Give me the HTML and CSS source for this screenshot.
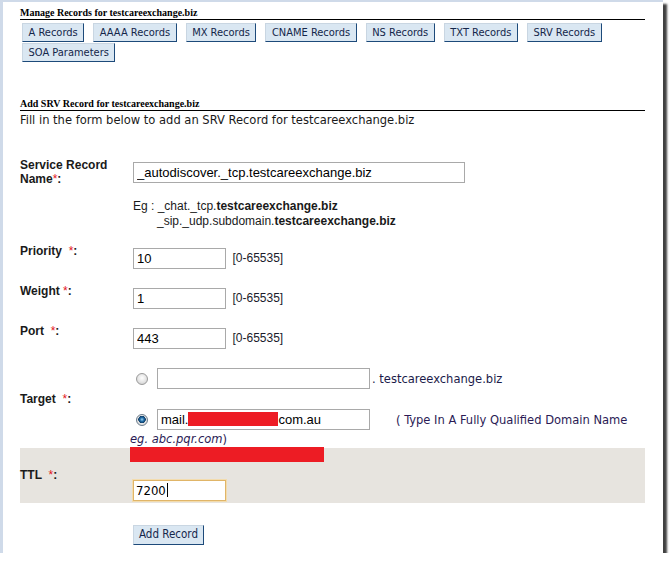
FILE: index.html
```html
<!DOCTYPE html>
<html lang="en">
  <head>
    <meta charset="UTF-8" />
    <title>Add SRV Record</title>
    <link rel="stylesheet" href="styles.css">
  </head>
  <body>
    <div class="window">
      <div class="page">
        <h2 class="section-title">Manage Records for testcareexchange.biz</h2>

        <div class="record-tabs">
          <a class="tab-button" href="#">A Records</a>
          <a class="tab-button" href="#">AAAA Records</a>
          <a class="tab-button" href="#">MX Records</a>
          <a class="tab-button" href="#">CNAME Records</a>
          <a class="tab-button" href="#">NS Records</a>
          <a class="tab-button" href="#">TXT Records</a>
          <a class="tab-button" href="#">SRV Records</a>
          <a class="tab-button" href="#">SOA Parameters</a>
        </div>

        <h2 class="section-title add-title">Add SRV Record for testcareexchange.biz</h2>
        <p class="intro">Fill in the form below to add an SRV Record for testcareexchange.biz</p>

        <form class="srv-form">
          <div class="form-row name-row">
            <label class="field-label">Service Record<br>Name<span class="req">*</span>:</label>
            <div class="field">
              <input class="text-input wide" type="text" value="_autodiscover._tcp.testcareexchange.biz">
              <div class="example">
                Eg : _chat._tcp.<b>testcareexchange.biz</b><br>
                <span class="indent">_sip._udp.subdomain.<b>testcareexchange.biz</b></span>
              </div>
            </div>
          </div>

          <div class="form-row">
            <label class="field-label">Priority &nbsp;<span class="req">*</span>:</label>
            <div class="field">
              <input class="text-input short" type="text" value="10">
              <span class="range">[0-65535]</span>
            </div>
          </div>

          <div class="form-row">
            <label class="field-label">Weight <span class="req">*</span>:</label>
            <div class="field">
              <input class="text-input short" type="text" value="1">
              <span class="range">[0-65535]</span>
            </div>
          </div>

          <div class="form-row">
            <label class="field-label">Port &nbsp;<span class="req">*</span>:</label>
            <div class="field">
              <input class="text-input short" type="text" value="443">
              <span class="range">[0-65535]</span>
            </div>
          </div>

          <div class="form-row target-row">
            <label class="field-label">Target &nbsp;<span class="req">*</span>:</label>
            <div class="field target-options">
              <div class="option">
                <span class="radio"></span>
                <input class="text-input target" type="text" value="">
                <span class="suffix">. testcareexchange.biz</span>
              </div>
              <div class="option">
                <span class="radio checked"></span>
                <div class="text-input target">mail.<span class="redact"></span>com.au</div>
                <span class="hint">( Type In A Fully Qualified Domain Name</span>
              </div>
            </div>
          </div>
          <div class="hint hint-wrap"><i>eg. abc.pqr.com</i>)</div>

          <div class="form-row ttl-row">
            <label class="field-label">TTL &nbsp;<span class="req">*</span>:</label>
            <div class="field">
              <div class="redact message"></div>
              <div class="text-input short focused">7200<span class="caret"></span></div>
            </div>
          </div>

          <div class="form-row submit-row">
            <div class="field-label"></div>
            <div class="field">
              <button class="tab-button submit" type="button">Add Record</button>
            </div>
          </div>
        </form>
      </div>
    </div>
  </body>
</html>
```

FILE: styles.css
```css
body {
  margin: 0;
  background: #ffffff;
  font-family: "Liberation Sans", Arial, sans-serif;
  color: #1a1a1a;
}

.window {
  width: 660px;
  height: 551px;
  border-top: 2px solid #cfdae9;
  border-left: 3px solid #cfdae9;
  background: #ffffff;
  box-shadow: 4px 4px 2px rgba(0, 0, 0, 0.75);
}

.page {
  width: 625px;
  margin-left: 17px;
}

.section-title {
  margin: 4px 0 0;
  font-family: "Liberation Serif", "Times New Roman", serif;
  font-size: 10px;
  line-height: 13px;
  font-weight: bold;
  color: #000;
  border-bottom: 1px solid #000;
}

.add-title {
  margin-top: 35px;
}

.record-tabs {
  display: flex;
  flex-wrap: wrap;
  column-gap: 9px;
  row-gap: 1px;
  padding: 3px 0 0 2px;
}

.tab-button {
  display: inline-block;
  box-sizing: border-box;
  height: 19px;
  padding: 0 5.5px;
  font-family: "DejaVu Sans Condensed", "DejaVu Sans", sans-serif;
  font-size: 11px;
  line-height: 17px;
  color: #14264a;
  text-decoration: none;
  background: #dae7f2;
  border: 1px solid;
  border-color: #c9d6e2 #1d4a7a #1d4a7a #c9d6e2;
}

.intro {
  margin: 1px 0 0;
  font-family: "DejaVu Sans Condensed", "DejaVu Sans", sans-serif;
  font-size: 12.8px;
  line-height: 15px;
  color: #1a1a1a;
}

.srv-form {
  margin-top: 31px;
}

.form-row {
  display: flex;
  margin-top: 15px;
}

.name-row {
  margin-top: 0;
}

.field-label {
  width: 113px;
  flex-shrink: 0;
  padding-right: 10px;
  box-sizing: border-box;
  font-size: 12px;
  line-height: 14px;
  font-weight: bold;
  color: #1a1a1a;
}

.req {
  color: #e3141c;
  font-weight: normal;
}

.field {
  flex: 1;
  padding-top: 4px;
}

.text-input {
  display: inline-block;
  box-sizing: border-box;
  height: 21px;
  margin: 0;
  padding: 0 3px;
  border: 1px solid #a9a9a9;
  font-family: "Liberation Sans", Arial, sans-serif;
  font-size: 13px;
  line-height: 19px;
  color: #000;
  background: #fff;
  vertical-align: top;
  outline: none;
}

.wide {
  width: 332px;
}

.short {
  width: 93px;
}

.target {
  width: 213px;
}

.range {
  margin-left: 2px;
  font-size: 12px;
  line-height: 21px;
  color: #1a1a2a;
}

.example {
  margin-top: 16px;
  font-size: 12px;
  line-height: 15px;
  color: #1a1a1a;
}

.example .indent {
  padding-left: 24px;
}

.target-row {
  margin-top: 19px;
  align-items: center;
}

.target-options {
  display: flex;
  flex-direction: column;
  gap: 20px;
  padding-top: 0;
}

.option {
  display: flex;
  align-items: center;
}

.radio {
  width: 12px;
  height: 12px;
  box-sizing: border-box;
  margin: 0 9px 0 3px;
  border-radius: 50%;
  border: 1px solid #9a9a9a;
  background: radial-gradient(circle at 50% 40%, #ffffff 0, #e4e4e4 55%, #c4c4c4 100%);
}

.radio.checked {
  border-color: #6b7c8c;
  background: radial-gradient(circle at 50% 45%, #9fd4f5 0, #1f6aa3 2px, #0f3c66 3.5px, #e8e8e8 4px, #c8c8c8 100%);
}

.suffix {
  margin-left: 2px;
  font-family: "DejaVu Sans Condensed", "DejaVu Sans", sans-serif;
  font-size: 12.8px;
  color: #1b1b4a;
}

.hint {
  margin-left: 26px;
  font-family: "DejaVu Sans Condensed", "DejaVu Sans", sans-serif;
  font-size: 12.8px;
  color: #2b1b55;
}

.hint-wrap {
  margin: 2px 0 2px 110px;
  line-height: 14px;
}

.redact {
  display: inline-block;
  width: 90px;
  height: 14px;
  vertical-align: -2px;
  background: #ed1c24;
}

.ttl-row {
  margin-top: 0;
  align-items: center;
  background: #e7e4df;
  padding-bottom: 2px;
}

.ttl-row .field {
  padding-top: 0;
}

.redact.message {
  display: block;
  width: 194px;
  height: 15px;
  margin: -1px 0 0 -3px;
}

.focused {
  margin-top: 18px;
  border: 1px solid #e0b568;
  box-shadow: 0 0 0 1px #f3dcae;
  font-family: "DejaVu Sans Condensed", "DejaVu Sans", sans-serif;
  padding-left: 2px;
}

.caret {
  display: inline-block;
  width: 1px;
  height: 14px;
  margin-left: 1px;
  vertical-align: -2px;
  background: #000;
}

.submit-row {
  margin-top: 17px;
}

.submit {
  height: 20px;
  font-size: 11.5px;
  padding: 0 5px;
  cursor: pointer;
}
```
